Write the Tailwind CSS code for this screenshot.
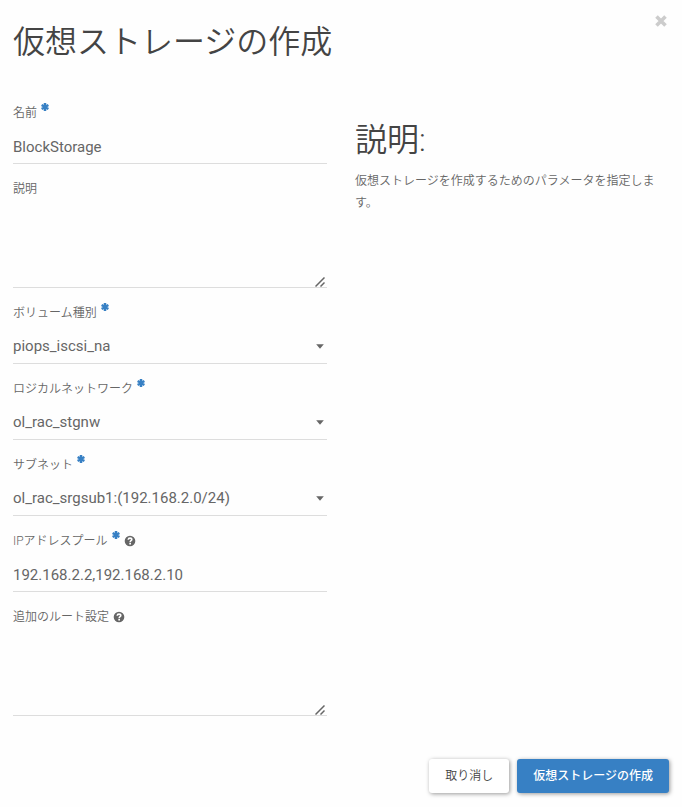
<!DOCTYPE html>
<html lang="ja">
<head>
  <meta charset="UTF-8">
  <meta name="viewport" content="width=device-width, initial-scale=1.0">
  <title>仮想ストレージの作成</title>
  <script src="https://cdn.jsdelivr.net/npm/@tailwindcss/browser@4"></script>
</head>
<body class="min-h-screen bg-[#fefefe] font-['Roboto','Noto_Sans_CJK_JP',sans-serif] text-xs text-[#666]">
  <svg class="hidden">
    <symbol id="asterisk" viewBox="0 0 8 8">
      <path d="M4 0v8M.6 2l6.8 4M.6 6l6.8-4" fill="none" stroke="currentColor" stroke-width="2.5"/>
    </symbol>
    <symbol id="help" viewBox="0 0 12 12">
      <circle cx="6" cy="6" r="5.300" fill="currentColor"/>
      <path d="M4.200 4.800C4.300 3.600 5 3.100 6 3.100s1.800.6 1.800 1.500C7.800 5.700 6.200 5.700 6.200 7" fill="none" stroke="#fff" stroke-width="1.600"/>
      <path d="M5.300 7.800h1.700v1.600H5.300z" fill="#fff"/>
    </symbol>
    <symbol id="caret" viewBox="0 0 8 5">
      <path d="M.2.300h7.600L4 4.700z" fill="currentColor"/>
    </symbol>
    <symbol id="grip" viewBox="0 0 10 10">
      <path d="M.5 9.500l9-9M5.500 9.500l4-4" fill="none" stroke="currentColor" stroke-width="1.500"/>
    </symbol>
  </svg>

  <form class="relative">
    <!-- Header -->
    <header class="px-[13px] pt-[18px]">
      <h1 class="text-[32px] leading-[48px] font-[350] text-[#444]">仮想ストレージの作成</h1>
      <button type="button" aria-label="閉じる" class="absolute top-[15px] right-[15px] text-[#ccc]">
        <svg class="w-3 h-3" viewBox="0 0 12 12"><path d="M1.500 1.500l9 9M10.500 1.500l-9 9" stroke="currentColor" stroke-width="3.600"/></svg>
      </button>
    </header>

    <!-- Body -->
    <div class="grid grid-cols-2 gap-7 px-[13px] pt-[34px]">
      <div class="flex flex-col gap-3">
        <div>
          <label for="name" class="flex h-6 items-center gap-1 pt-0.5 font-[350]">名前
            <svg class="w-2 h-2 mb-3 text-[#3780c4]"><use href="#asterisk"/></svg>
          </label>
          <input id="name" type="text" value="BlockStorage" class="block h-10 w-full border-b border-[#ddd] pt-1.5 text-[15px] outline-none">
        </div>

        <div>
          <label for="description" class="flex h-6 items-center pt-0.5 font-[350]">説明</label>
          <div class="relative">
            <textarea id="description" class="block h-22 w-full resize-y border-b border-[#ddd] text-[15px] outline-none [&::-webkit-resizer]:hidden"></textarea>
            <svg class="pointer-events-none absolute right-0.5 bottom-px w-2.5 h-2.5"><use href="#grip"/></svg>
          </div>
        </div>

        <div>
          <label for="volume-type" class="flex h-6 items-center gap-1 pt-0.5 font-[350]">ボリューム種別
            <svg class="w-2 h-2 mb-3 text-[#3780c4]"><use href="#asterisk"/></svg>
          </label>
          <div class="relative">
            <select id="volume-type" class="block h-10 w-full appearance-none border-b border-[#ddd] pt-1.5 text-[15px] outline-none">
              <option>piops_iscsi_na</option>
            </select>
            <svg class="pointer-events-none absolute right-[3px] top-5 w-2 h-[5px]"><use href="#caret"/></svg>
          </div>
        </div>

        <div>
          <label for="network" class="flex h-6 items-center gap-1 pt-0.5 font-[350]">ロジカルネットワーク
            <svg class="w-2 h-2 mb-3 text-[#3780c4]"><use href="#asterisk"/></svg>
          </label>
          <div class="relative">
            <select id="network" class="block h-10 w-full appearance-none border-b border-[#ddd] pt-1.5 text-[15px] outline-none">
              <option>ol_rac_stgnw</option>
            </select>
            <svg class="pointer-events-none absolute right-[3px] top-5 w-2 h-[5px]"><use href="#caret"/></svg>
          </div>
        </div>

        <div>
          <label for="subnet" class="flex h-6 items-center gap-1 pt-0.5 font-[350]">サブネット
            <svg class="w-2 h-2 mb-3 text-[#3780c4]"><use href="#asterisk"/></svg>
          </label>
          <div class="relative">
            <select id="subnet" class="block h-10 w-full appearance-none border-b border-[#ddd] pt-1.5 text-[15px] outline-none">
              <option>ol_rac_srgsub1:(192.168.2.0/24)</option>
            </select>
            <svg class="pointer-events-none absolute right-[3px] top-5 w-2 h-[5px]"><use href="#caret"/></svg>
          </div>
        </div>

        <div>
          <label for="ip-pool" class="flex h-6 items-center gap-1 pt-0.5 font-[350]">IPアドレスプール
            <svg class="w-2 h-2 mb-3 text-[#3780c4]"><use href="#asterisk"/></svg>
            <svg class="w-3 h-3"><use href="#help"/></svg>
          </label>
          <input id="ip-pool" type="text" value="192.168.2.2,192.168.2.10" class="block h-10 w-full border-b border-[#ddd] pt-1.5 text-[15px] outline-none">
        </div>

        <div>
          <label for="routes" class="flex h-6 items-center gap-1 pt-0.5 font-[350]">追加のルート設定
            <svg class="w-3 h-3"><use href="#help"/></svg>
          </label>
          <div class="relative">
            <textarea id="routes" class="block h-22 w-full resize-y border-b border-[#ddd] text-[15px] outline-none [&::-webkit-resizer]:hidden"></textarea>
            <svg class="pointer-events-none absolute right-0.5 bottom-px w-2.5 h-2.5"><use href="#grip"/></svg>
          </div>
        </div>
      </div>

      <div class="pt-4">
        <h2 class="text-[32px] leading-[48px] font-[350] text-[#444]">説明:</h2>
        <p class="mt-1.5 leading-[22px] font-[350]">仮想ストレージを作成するためのパラメータを指定します。</p>
      </div>
    </div>

    <!-- Footer -->
    <footer class="flex justify-end gap-2 px-[13px] pt-[43px] pb-3.5">
      <button type="button" class="h-[34px] rounded-[3px] bg-white px-4 font-[350] text-[#444] shadow-[1px_1px_4px_rgba(0,0,0,0.4)]">取り消し</button>
      <button type="submit" class="h-[34px] rounded-[3px] bg-[#3780c4] px-4 font-medium text-white shadow-[1px_1px_4px_rgba(0,0,0,0.4)]">仮想ストレージの作成</button>
    </footer>
  </form>
</body>
</html>
